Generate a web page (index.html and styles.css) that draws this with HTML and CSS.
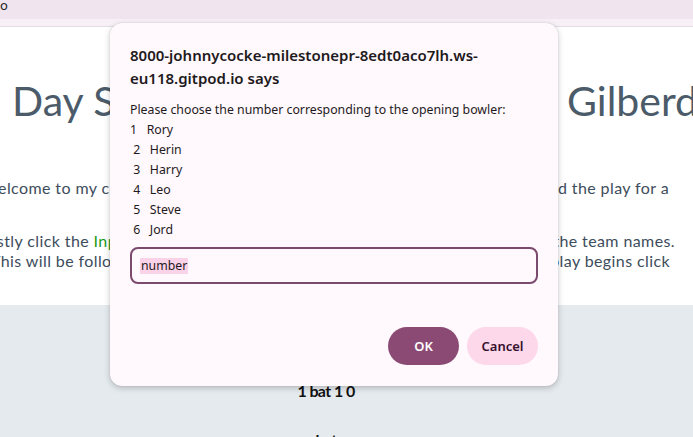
FILE: index.html
```html
<!DOCTYPE html>
<html lang="en">
<head>
<meta charset="utf-8">
<title>Day Scorer</title>
<link rel="stylesheet" href="styles.css">
</head>
<body>
<div class="topbar"><span>o</span></div>
<div class="subbar"></div>
<main class="page">
  <section class="hero">
    <h1 class="title"><span class="title-left">Day Scoring Application for</span><span class="title-right">Gilberd</span></h1>
    <p class="line line-1"><span>Welcome to my cricket scorer,</span><span>where you can record the play for a</span></p>
    <p class="line line-2"><span>Firstly click the <span class="green">Input</span> button</span><span>and enter the team names.</span></p>
    <p class="line line-3"><span>This will be followed by</span><span>and once play begins click</span></p>
  </section>
  <section class="scores">
    <p class="score">1 bat 1 0</p>
    <p class="score">bat</p>
  </section>
</main>
<div class="dialog">
  <h2 class="dlg-title">8000-johnnycocke-milestonepr-8edt0aco7lh.ws-<br>eu118.gitpod.io says</h2>
  <p class="dlg-msg">Please choose the number corresponding to the opening bowler:</p>
  <pre class="dlg-list">1   Rory
 2   Herin
 3   Harry
 4   Leo
 5   Steve
 6   Jord</pre>
  <div class="dlg-input"><span class="sel">number</span></div>
  <div class="dlg-buttons">
    <button class="btn btn-ok">OK</button>
    <button class="btn btn-cancel">Cancel</button>
  </div>
</div>
</body>
</html>
```
FILE: styles.css
```css
* { box-sizing: border-box; }
html, body { margin: 0; padding: 0; }
body {
  width: 693px;
  height: 437px;
  overflow: hidden;
  background: #e5eaee;
  font-family: "Lato", "Open Sans", sans-serif;
  position: relative;
}
.topbar {
  height: 19px;
  background: #f0e5ef;
  font-family: "Noto Sans", sans-serif;
  font-size: 13px;
  line-height: 10px;
  color: #222;
  margin-left: -1px;
  padding-left: 1px;
}
.subbar {
  height: 8px;
  background: #f7f0f6;
  border-bottom: 1px solid #e2dde2;
}
.page {
  margin-left: -24px;
  width: 720px;
}
.hero {
  background: #fff;
  height: 278px;
  padding-top: 50px;
  color: #3f4f5e;
}
.title {
  margin: 0 0 0 36px;
  font-weight: 400;
  font-size: 41px;
  line-height: 48px;
  white-space: nowrap;
  color: #4b5b69;
  display: flex;
}
.title-left { width: 555px; overflow: hidden; flex: none; }
.line {
  margin: 0;
  font-size: 16px;
  line-height: 20px;
  letter-spacing: 0.4px;
  white-space: nowrap;
  display: flex;
  justify-content: space-between;
  color: #3d4d5c;
}
.line-1 { margin: 53px 0 0 6px; width: 687px; }
.line-2 { margin: 33px 0 0 1px; width: 698px; }
.line-3 { margin: 0 0 0 15px; width: 679px; }
.green { color: #1a9a1a; }
.scores {
  text-align: center;
  padding-top: 77px;
  padding-right: 20px;
}
.score {
  margin: 0 0 31px;
  font-size: 16px;
  line-height: 18px;
  font-weight: 700;
  color: #111;
  letter-spacing: -0.6px;
}
.dialog {
  position: absolute;
  left: 110px;
  top: 23px;
  width: 448px;
  height: 363px;
  background: #fff8fc;
  border-radius: 12px;
  box-shadow: 0 2px 6px rgba(0,0,0,0.22), 0 0 1px rgba(0,0,0,0.2);
  padding: 21px 20px 20px 20px;
  font-family: "Noto Sans", "Open Sans", sans-serif;
  color: #1e1a1d;
}
.dlg-title {
  margin: 0;
  font-size: 15px;
  font-weight: 600;
  line-height: 23px;
}
.dlg-msg {
  margin: 10px 0 0;
  font-size: 12.3px;
  line-height: 20px;
}
.dlg-list {
  margin: 0;
  font-family: "Noto Sans", "Open Sans", sans-serif;
  font-size: 12.3px;
  line-height: 20px;
}
.dlg-input {
  margin-top: 7px;
  height: 37px;
  border: 2px solid #7c4a6f;
  border-radius: 8px;
  padding: 0 8px;
  display: flex;
  align-items: center;
  font-size: 12.3px;
}
.sel { background: #fbd3e8; padding: 0 1px; line-height: 16px; }
.dlg-buttons {
  display: flex;
  justify-content: flex-end;
  gap: 8px;
  margin-top: 43px;
}
.btn {
  height: 38px;
  width: 71px;
  border: none;
  border-radius: 19px;
  font-family: "Noto Sans", sans-serif;
  font-size: 13px;
  font-weight: 600;
}
.btn-ok { background: #8b4a74; color: #fff; }
.btn-cancel { background: #fdd7ea; color: #36122d; }
```
